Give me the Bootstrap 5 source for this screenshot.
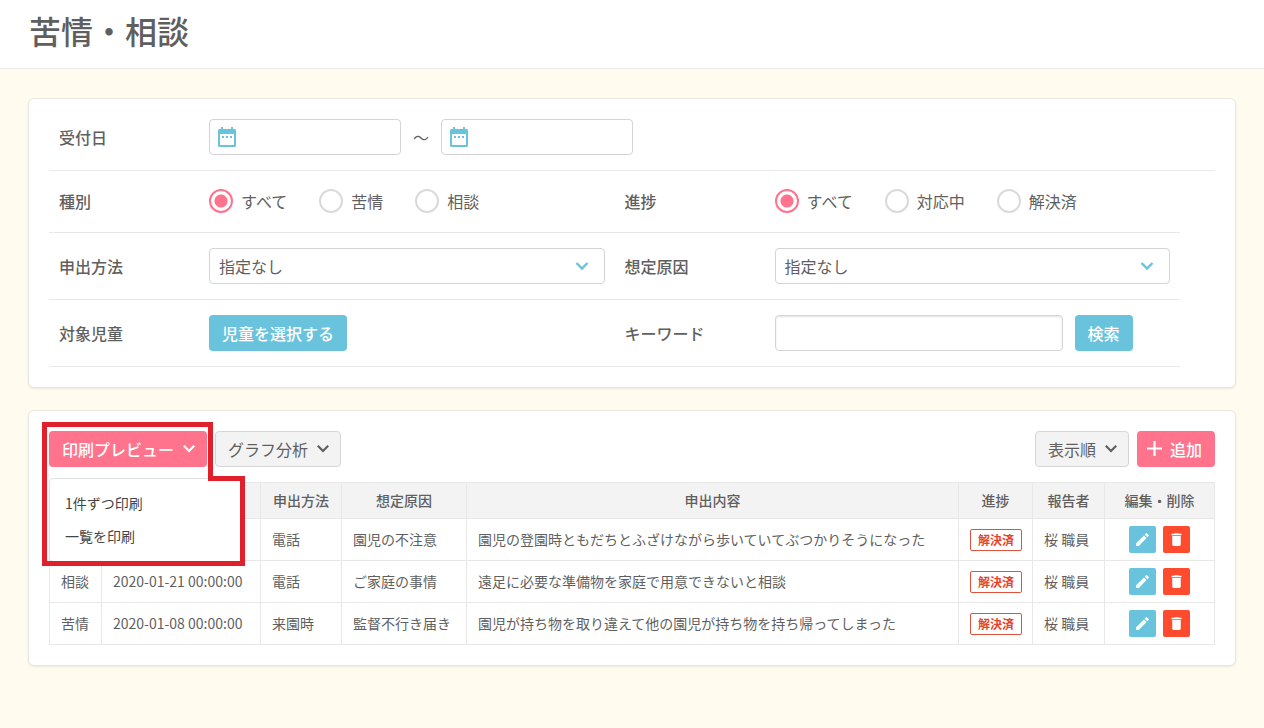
<!DOCTYPE html>
<html lang="ja">
<head>
<meta charset="utf-8">
<meta name="viewport" content="width=device-width, initial-scale=1">
<title>苦情・相談</title>
<link href="https://cdn.jsdelivr.net/npm/bootstrap@5.3.0/dist/css/bootstrap.min.css" rel="stylesheet">
<style>
  :root { --ink: #5f5f5f; --line: #e8e8e8; --edge: #d4d4d4; --sky: #69c3dd; --rose: #ff738d; --alert: #ff4b2d; }
  body { font-family: "Noto Sans CJK JP", sans-serif; font-size: 16px; line-height: 24px; color: var(--ink); background: #fffbee; }
  .page-head { background: #fff; border-bottom: 1px solid #e9e9e9; padding: 6px 29px 14px; }
  .page-head h1 { font-size: 32px; line-height: 48px; font-weight: 500; }
  .page-main { padding: 29px 28px; }
  .panel { background: #fff; border: 1px solid #e9e7e0; border-radius: 6px; box-shadow: 0 1px 2px rgba(0,0,0,.08); padding: 20px; }
  .panel-search { padding-top: 5px; margin-bottom: 22px; }

  .cond { border-bottom: 1px solid var(--line); padding: 15px 0; }
  .cond-narrow { width: 97%; }
  .cond-radios { padding: 14px 0 16px; }
  .cond-name { flex: 0 0 160px; padding-left: 10px; font-weight: 500; }
  .cond-half { flex: 1 1 50%; min-width: 0; padding-right: 10px; }
  .form-control, .form-select, .btn { height: 36px; font-size: 16px; line-height: 24px; border-radius: 4px; color: var(--ink); }
  .form-control, .form-select { border-color: var(--edge); }
  .form-control { padding: 5px 10px; }
  .form-select { padding: 5px 36px 5px 9px; background-position: right 14px center; background-size: 16px 16px;
    background-image: url("data:image/svg+xml,%3Csvg xmlns='http://www.w3.org/2000/svg' viewBox='0 0 16 16'%3E%3Cpath fill='none' stroke='%2369c3dd' stroke-width='2.4' d='M2.5 5l5.500 5.500L13.500 5'/%3E%3C/svg%3E"); }
  .date-box { width: 192px; }
  .date-box .form-control { padding-left: 34px; }
  .date-box svg { position: absolute; left: 6px; top: 6px; pointer-events: none; }
  .tilde { width: 40px; }
  .word-box { width: 288px; margin-right: 12px; box-shadow: inset 0 1px 2px rgba(0,0,0,.12); }
  .choices { min-height: 31px; gap: 32px; }
  .form-check-input { width: 24px; height: 24px; border: 2px solid #dadada; }
  .form-check-input:checked { background-color: #fff; border-color: var(--rose);
    background-image: radial-gradient(circle, var(--rose) 6px, transparent 7px); }

  .btn { padding: 5px 12px; }
  .btn-sky, .btn-rose, .btn-sky:hover, .btn-rose:hover { color: #fff; font-weight: 500; }
  .btn-sky, .btn-sky:hover { background: var(--sky); }
  .btn-rose, .btn-rose:hover { background: var(--rose); }
  .btn-plain, .btn-plain:hover { background: #f3f3f3; border-color: #d6d6d6; }
  .btn-open { gap: 9px; padding-right: 11px; }
  .btn-add { padding-left: 8px; }
  .print-menu { position: absolute; top: 47px; left: 0; width: 194px; border: 1px solid #e2e2e2; border-radius: 4px; padding: 8px 0; }
  .print-menu .dropdown-item { font-size: 14px; line-height: 21px; padding: 6px 15px; color: #444; }
  .highlight { position: absolute; left: -7px; top: -9px; z-index: 1100; pointer-events: none; }

  .tools { margin-bottom: 15px; }
  .records { font-size: 14px; line-height: 21px; table-layout: fixed; --bs-table-color: var(--ink); color: var(--ink); border-color: var(--line); }
  .records th { background: #f3f3f3; font-weight: 500; text-align: center; padding: 7px 4px; }
  .records td { padding: 7px 11px; height: 42px; vertical-align: middle; white-space: nowrap; }
  .c-kind { width: 52px; } .c-date { width: 159px; } .c-way { width: 81px; } .c-cause { width: 125px; }
  .c-state { width: 74px; } .c-staff { width: 72px; } .c-edit { width: 110px; }
  .state { display: inline-block; border: 1px solid #e0523c; border-radius: 2px; color: #e8432a; font-size: 12px; line-height: 20px; font-weight: 700; padding: 0 7px; }
  .row-tools { gap: 7px; }
  .btn-tool { width: 27px; height: 27px; border-radius: 2px; padding: 0; border: 0; }
  .btn-drop, .btn-drop:hover { background: var(--alert); }
</style>
</head>
<body>
<svg class="d-none" aria-hidden="true">
  <symbol id="i-cal" viewBox="0 0 24 24"><path fill-rule="evenodd" d="M4.500 4H6V2h2v2h8V2h2v2h1.500A1.500 1.500 0 0 1 21 5.500v15a1.500 1.500 0 0 1-1.500 1.500h-15A1.500 1.500 0 0 1 3 20.500v-15A1.500 1.500 0 0 1 4.500 4zM5 9v11h14V9zM7 11h2v2H7zm4 0h2v2h-2zm4 0h2v2h-2z"/></symbol>
  <symbol id="i-down" viewBox="0 0 12 12"><path fill="none" stroke="currentColor" stroke-width="2.200" d="M.8 2.800L6 8l5.200-5.200"/></symbol>
  <symbol id="i-plus" viewBox="0 0 16 16"><path fill="none" stroke="currentColor" stroke-width="2.200" d="M8.500 0v15M1 7.500h15"/></symbol>
  <symbol id="i-pen" viewBox="0 0 24 24"><path d="M3 17.250V21h3.750L17.810 9.940l-3.750-3.750zM20.710 7.040a1 1 0 0 0 0-1.410l-2.340-2.340a1 1 0 0 0-1.410 0l-1.830 1.830 3.750 3.750z"/></symbol>
  <symbol id="i-bin" viewBox="0 0 24 24"><path d="M6 19a2 2 0 0 0 2 2h8a2 2 0 0 0 2-2V7H6zM19 4h-3.500l-1-1h-5l-1 1H5v2h14z"/></symbol>
</svg>

<header class="page-head"><h1 class="m-0">苦情・相談</h1></header>

<main class="page-main">
  <form class="panel panel-search">
    <div class="cond d-flex align-items-center">
      <label class="cond-name" for="from">受付日</label>
      <div class="date-box position-relative">
        <input class="form-control" type="text" id="from">
        <svg width="24" height="24" fill="#69c3dd"><use href="#i-cal"/></svg>
      </div>
      <span class="tilde text-center">～</span>
      <div class="date-box position-relative">
        <input class="form-control" type="text" id="to" aria-label="受付日">
        <svg width="24" height="24" fill="#69c3dd"><use href="#i-cal"/></svg>
      </div>
    </div>

    <div class="cond cond-narrow cond-radios d-flex">
      <div class="cond-half d-flex align-items-center">
        <span class="cond-name" id="kind">種別</span>
        <div class="choices d-flex align-items-center" role="radiogroup" aria-labelledby="kind">
          <label class="d-flex align-items-center gap-2"><input class="form-check-input m-0" type="radio" name="kind" checked>すべて</label>
          <label class="d-flex align-items-center gap-2"><input class="form-check-input m-0" type="radio" name="kind">苦情</label>
          <label class="d-flex align-items-center gap-2"><input class="form-check-input m-0" type="radio" name="kind">相談</label>
        </div>
      </div>
      <div class="cond-half d-flex align-items-center">
        <span class="cond-name" id="state">進捗</span>
        <div class="choices d-flex align-items-center" role="radiogroup" aria-labelledby="state">
          <label class="d-flex align-items-center gap-2"><input class="form-check-input m-0" type="radio" name="state" checked>すべて</label>
          <label class="d-flex align-items-center gap-2"><input class="form-check-input m-0" type="radio" name="state">対応中</label>
          <label class="d-flex align-items-center gap-2"><input class="form-check-input m-0" type="radio" name="state">解決済</label>
        </div>
      </div>
    </div>

    <div class="cond cond-narrow d-flex">
      <div class="cond-half d-flex align-items-center">
        <label class="cond-name" for="way">申出方法</label>
        <select class="form-select" id="way"><option>指定なし</option></select>
      </div>
      <div class="cond-half d-flex align-items-center">
        <label class="cond-name" for="cause">想定原因</label>
        <select class="form-select" id="cause"><option>指定なし</option></select>
      </div>
    </div>

    <div class="cond cond-narrow d-flex">
      <div class="cond-half d-flex align-items-center">
        <span class="cond-name">対象児童</span>
        <button class="btn btn-sky" type="button">児童を選択する</button>
      </div>
      <div class="cond-half d-flex align-items-center">
        <label class="cond-name" for="word">キーワード</label>
        <input class="form-control word-box" type="text" id="word">
        <button class="btn btn-sky flex-shrink-0" type="button">検索</button>
      </div>
    </div>
  </form>

  <section class="panel">
    <div class="tools d-flex gap-2">
      <div class="position-relative">
        <button class="btn btn-rose btn-open d-flex align-items-center" type="button" aria-expanded="true">印刷プレビュー<svg width="12" height="12"><use href="#i-down"/></svg></button>
        <div class="dropdown-menu print-menu show">
          <a class="dropdown-item" href="#">1件ずつ印刷</a>
          <a class="dropdown-item" href="#">一覧を印刷</a>
        </div>
        <svg class="highlight" width="203" height="144" aria-hidden="true"><path fill="none" stroke="#e0202b" stroke-width="5" d="M2.500 2.500h166v54h32v85H2.500z"/></svg>
      </div>
      <button class="btn btn-plain btn-open d-flex align-items-center" type="button">グラフ分析<svg width="12" height="12"><use href="#i-down"/></svg></button>
      <button class="btn btn-plain btn-open d-flex align-items-center ms-auto" type="button">表示順<svg width="12" height="12"><use href="#i-down"/></svg></button>
      <button class="btn btn-rose btn-add d-flex align-items-center gap-2" type="button"><svg width="16" height="16"><use href="#i-plus"/></svg>追加</button>
    </div>

    <table class="table table-bordered records mb-0">
      <colgroup><col class="c-kind"><col class="c-date"><col class="c-way"><col class="c-cause"><col><col class="c-state"><col class="c-staff"><col class="c-edit"></colgroup>
      <thead>
        <tr><th></th><th></th><th>申出方法</th><th>想定原因</th><th>申出内容</th><th>進捗</th><th>報告者</th><th>編集・削除</th></tr>
      </thead>
      <tbody>
        <tr>
          <td></td><td></td><td>電話</td><td>園児の不注意</td><td>園児の登園時ともだちとふざけながら歩いていてぶつかりそうになった</td>
          <td><span class="state">解決済</span></td><td>桜 職員</td>
          <td><div class="row-tools d-flex justify-content-center"><button class="btn btn-sky btn-tool" type="button" aria-label="編集"><svg class="d-block m-auto" width="17" height="17" fill="#fff"><use href="#i-pen"/></svg></button><button class="btn btn-drop btn-tool" type="button" aria-label="削除"><svg class="d-block m-auto" width="17" height="17" fill="#fff"><use href="#i-bin"/></svg></button></div></td>
        </tr>
        <tr>
          <td>相談</td><td>2020-01-21 00:00:00</td><td>電話</td><td>ご家庭の事情</td><td>遠足に必要な準備物を家庭で用意できないと相談</td>
          <td><span class="state">解決済</span></td><td>桜 職員</td>
          <td><div class="row-tools d-flex justify-content-center"><button class="btn btn-sky btn-tool" type="button" aria-label="編集"><svg class="d-block m-auto" width="17" height="17" fill="#fff"><use href="#i-pen"/></svg></button><button class="btn btn-drop btn-tool" type="button" aria-label="削除"><svg class="d-block m-auto" width="17" height="17" fill="#fff"><use href="#i-bin"/></svg></button></div></td>
        </tr>
        <tr>
          <td>苦情</td><td>2020-01-08 00:00:00</td><td>来園時</td><td>監督不行き届き</td><td>園児が持ち物を取り違えて他の園児が持ち物を持ち帰ってしまった</td>
          <td><span class="state">解決済</span></td><td>桜 職員</td>
          <td><div class="row-tools d-flex justify-content-center"><button class="btn btn-sky btn-tool" type="button" aria-label="編集"><svg class="d-block m-auto" width="17" height="17" fill="#fff"><use href="#i-pen"/></svg></button><button class="btn btn-drop btn-tool" type="button" aria-label="削除"><svg class="d-block m-auto" width="17" height="17" fill="#fff"><use href="#i-bin"/></svg></button></div></td>
        </tr>
      </tbody>
    </table>
  </section>
</main>
<script src="https://cdn.jsdelivr.net/npm/bootstrap@5.3.0/dist/js/bootstrap.bundle.min.js"></script>
</body>
</html>
